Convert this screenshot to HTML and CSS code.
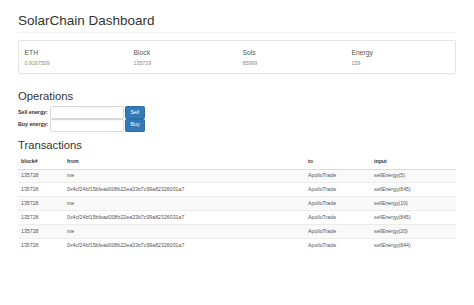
FILE: index.html
```html
<!DOCTYPE html>
<html lang="en">
<head>
    <meta charset="UTF-8">
    <meta name="viewport" content="width=device-width, initial-scale=1.0">
    <title>SolarChain Dashboard</title>
    <link rel="stylesheet" href="styles.css">
</head>
<body>
    <div class="container">
        <div class="page-header">
            <h1>SolarChain Dashboard</h1>
        </div>

        <div class="panel">
            <div class="stats">
                <div class="stat">
                    <h4>ETH</h4>
                    <p>0.9167509</p>
                </div>
                <div class="stat">
                    <h4>Block</h4>
                    <p>135729</p>
                </div>
                <div class="stat">
                    <h4>Sols</h4>
                    <p>85999</p>
                </div>
                <div class="stat">
                    <h4>Energy</h4>
                    <p>159</p>
                </div>
            </div>
        </div>

        <h2>Operations</h2>
        <div class="form-row">
            <label for="sell">Sell energy:</label>
            <input type="text" id="sell" class="form-control">
            <button class="btn">Sell</button>
        </div>
        <div class="form-row">
            <label for="buy">Buy energy:</label>
            <input type="text" id="buy" class="form-control">
            <button class="btn">Buy</button>
        </div>

        <h2>Transactions</h2>
        <table class="table">
            <colgroup>
                <col class="col-block">
                <col class="col-from">
                <col class="col-to">
                <col class="col-input">
            </colgroup>
            <thead>
                <tr>
                    <th>block#</th>
                    <th>from</th>
                    <th>to</th>
                    <th>input</th>
                </tr>
            </thead>
            <tbody>
                <tr>
                    <td>135728</td>
                    <td>me</td>
                    <td>ApolloTrade</td>
                    <td>sellEnergy(5)</td>
                </tr>
                <tr>
                    <td>135728</td>
                    <td>0x4cf24bf15bfead008b22ea33b7c99a82326031a7</td>
                    <td>ApolloTrade</td>
                    <td>sellEnergy(845)</td>
                </tr>
                <tr>
                    <td>135728</td>
                    <td>me</td>
                    <td>ApolloTrade</td>
                    <td>sellEnergy(10)</td>
                </tr>
                <tr>
                    <td>135728</td>
                    <td>0x4cf24bf15bfead008b22ea33b7c99a82326031a7</td>
                    <td>ApolloTrade</td>
                    <td>sellEnergy(845)</td>
                </tr>
                <tr>
                    <td>135728</td>
                    <td>me</td>
                    <td>ApolloTrade</td>
                    <td>sellEnergy(20)</td>
                </tr>
                <tr>
                    <td>135728</td>
                    <td>0x4cf24bf15bfead008b22ea33b7c99a82326031a7</td>
                    <td>ApolloTrade</td>
                    <td>sellEnergy(844)</td>
                </tr>
            </tbody>
        </table>
    </div>
</body>
</html>
```

FILE: styles.css
```css
body {
    margin: 0;
    font-family: "Liberation Sans", Arial, sans-serif;
    font-size: 5.25px;
    line-height: 7.5px;
    color: #333;
    background-color: #fff;
}

.container {
    margin: 0 18px;
}

.page-header {
    padding: 14px 0 3.5px;
    margin: 0 0 7px;
    border-bottom: 1px solid #f2f2f2;
}

h1 {
    margin: 0;
    font-size: 13.5px;
    font-weight: normal;
    line-height: 14.85px;
}

h2 {
    margin: 16px 0 3.75px;
    font-size: 11.25px;
    font-weight: normal;
    line-height: 12.4px;
}

.panel {
    border: 1px solid #e4e4e4;
    border-radius: 1.5px;
    box-shadow: 0 0.5px 0.5px rgba(0, 0, 0, 0.05);
}

.stats {
    display: grid;
    grid-template-columns: repeat(4, 1fr);
    padding: 6px 0 5px;
}

.stat {
    padding: 0 5.6px;
}

.stat h4 {
    margin: 2px 0 3px;
    font-size: 6.75px;
    font-weight: normal;
    line-height: 8px;
    color: #555;
}

.stat p {
    margin: 0;
    color: #888;
}

.form-row {
    display: flex;
    align-items: center;
    gap: 1.5px;
    height: 12.75px;
}

.form-row label {
    flex-shrink: 0;
    min-width: 30.5px;
    font-weight: bold;
    white-space: nowrap;
}

.form-control {
    box-sizing: border-box;
    flex-shrink: 0;
    width: 73.5px;
    height: 12.75px;
    margin: 0;
    padding: 2.25px 4.5px;
    font: inherit;
    border: 1px solid #d8d8d8;
    border-radius: 1.5px;
    box-shadow: inset 0 0.5px 0.5px rgba(0, 0, 0, 0.06);
}

.btn {
    box-sizing: border-box;
    flex-shrink: 0;
    height: 12.75px;
    margin: 0;
    padding: 0 4.5px;
    font: inherit;
    color: #fff;
    background-color: #337ab7;
    border: 1px solid #2e6da4;
    border-radius: 1.5px;
    cursor: pointer;
}

.form-row + h2 {
    margin-top: 7.4px;
}

h2 + .table {
    margin-top: 0.75px;
}

.table {
    width: 100%;
    table-layout: fixed;
    border-collapse: collapse;
}

.col-block { width: 46px; }
.col-from { width: 241px; }
.col-to { width: 66px; }
.col-input { width: 85px; }

.table th,
.table td {
    padding: 2.7px 3px;
    text-align: left;
    white-space: nowrap;
}

.table th {
    padding: 3px;
    font-weight: bold;
    border-bottom: 1px solid #dcdcdc;
}

.table td {
    border-top: 1px solid #ececec;
    color: #555;
}

.table tbody tr:nth-child(odd) {
    background-color: #f9f9f9;
}
```
